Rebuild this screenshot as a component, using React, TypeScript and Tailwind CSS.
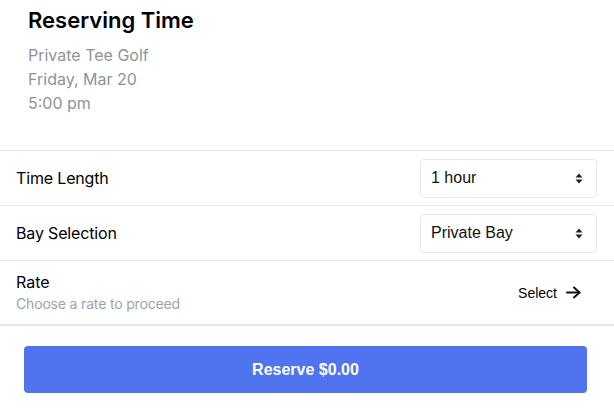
import React from 'react';

const Caret = () => (
  <svg width="8" height="11" viewBox="0 0 8 11" className="shrink-0">
    <path d="M4 0.5 L7.5 4.5 H0.5 Z" fill="#1f1f1f" />
    <path d="M4 10.5 L7.5 6.5 H0.5 Z" fill="#1f1f1f" />
  </svg>
);

const FakeSelect = ({ value }: { value: string }) => (
  <div className="flex h-[39px] w-[177px] items-center justify-between rounded-[4px] border border-[#e5e7eb] bg-white pl-[10px] pr-[13px] font-['Liberation_Sans',Arial,sans-serif] text-base text-[#111]">
    <span>{value}</span>
    <Caret />
  </div>
);

const App: React.FC = () => {
  return (
    <div className="w-[614px] bg-white font-['Inter',sans-serif] text-black">
      {/* Header */}
      <div className="px-7 pb-[35px] pt-[6px]">
        <h1 className="text-[22px] font-semibold leading-7">Reserving Time</h1>
        <div className="mt-[9px] text-base leading-6 text-[#8e939b]">
          <div>Private Tee Golf</div>
          <div>Friday, Mar 20</div>
          <div>5:00 pm</div>
        </div>
      </div>

      {/* Rows */}
      <div className="flex h-[55px] items-center justify-between border-t border-[#e5e7eb] pl-4 pr-[17px]">
        <span className="text-base tracking-[-0.01em]">Time Length</span>
        <FakeSelect value="1 hour" />
      </div>
      <div className="flex h-[55px] items-center justify-between border-t border-[#e5e7eb] pl-4 pr-[17px]">
        <span className="text-base tracking-[-0.01em]">Bay Selection</span>
        <FakeSelect value="Private Bay" />
      </div>
      <div className="flex h-[66px] items-center justify-between border-b-2 border-t border-[#e5e7eb] pl-4 pr-[33px]">
        <div className="-mt-px flex flex-col">
          <span className="text-base leading-6">Rate</span>
          <span className="text-sm leading-5 tracking-[-0.012em] text-[#9ca3af]">Choose a rate to proceed</span>
        </div>
        <button className="flex items-center gap-[9px] font-['Liberation_Sans',Arial,sans-serif] text-sm text-black">
          Select
          <svg width="15" height="13" viewBox="0 0 15 13" fill="none" stroke="#111" strokeWidth="2" strokeLinecap="round" strokeLinejoin="round">
            <path d="M1 6.5 H13.5" />
            <path d="M8 1.5 L13.5 6.5 L8 11.5" />
          </svg>
        </button>
      </div>

      {/* Footer */}
      <div className="pb-[18px] pt-[20px]">
        <button className="ml-6 h-[47px] w-[563px] rounded-[4px] bg-[#5073ef] font-['Liberation_Sans',Arial,sans-serif] text-base font-bold text-white">
          Reserve $0.00
        </button>
      </div>
    </div>
  );
};

export default App;
